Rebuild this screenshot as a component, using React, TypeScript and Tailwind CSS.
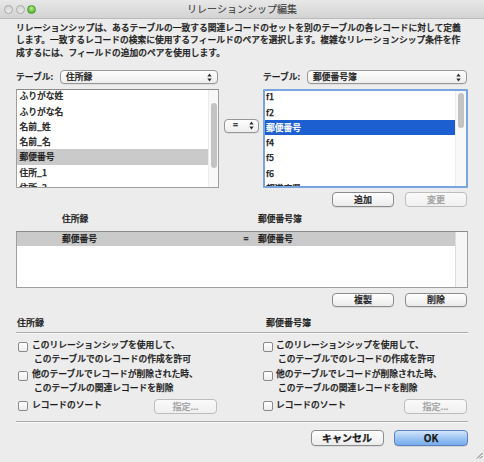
import React from "react";

function Light({ green }: { green?: boolean }) {
  return green ? (
    <span className="block w-[9px] h-[9px] rounded-full border border-[#4f9a33] bg-[radial-gradient(circle_at_50%_35%,#b9f08f_0%,#6cc447_55%,#4a9d2b_100%)]" />
  ) : (
    <span className="block w-[9px] h-[9px] rounded-full border border-[#a9a9a9] bg-gradient-to-b from-[#d6d6d6] to-[#ececec]" />
  );
}

function UpDown() {
  return (
    <svg width="5" height="9" viewBox="0 0 5 9" className="shrink-0">
      <path d="M2.5 0.6 L4.7 3.4 H0.3 Z M2.5 8.4 L4.7 5.6 H0.3 Z" fill="#2e2e2e" />
    </svg>
  );
}

function Popup({ w, label, pl, pr }: { w: string; label: string; pl: string; pr: string }) {
  return (
    <div
      className={`${w} ${pl} ${pr} h-[14px] flex items-center justify-between rounded-[4px] border border-[#979797] bg-gradient-to-b from-white to-[#ededed] shadow-[0_0.5px_0.5px_rgba(0,0,0,0.12)] leading-none`}
    >
      <span>{label}</span>
      <UpDown />
    </div>
  );
}

function Btn({ children, disabled, w }: { children: React.ReactNode; disabled?: boolean; w: string }) {
  return disabled ? (
    <div className={`${w} h-[14.5px] flex items-center justify-center rounded-[4px] border border-[#bdbdbd] bg-gradient-to-b from-[#fafafa] to-[#f0f0f0] text-[9px] text-[#a3a3a3] leading-none`}>
      {children}
    </div>
  ) : (
    <div className={`${w} h-[14.5px] flex items-center justify-center rounded-[4px] border border-[#8c8c8c] bg-gradient-to-b from-white to-[#ebebeb] shadow-[0_0.5px_0.5px_rgba(0,0,0,0.15)] text-[9px] text-[#1b1b1b] leading-none`}>
      {children}
    </div>
  );
}

function Check() {
  return (
    <span className="block shrink-0 w-[10px] h-[10px] rounded-[2px] border border-[#8a8a8a] bg-gradient-to-b from-white to-[#ececec]" />
  );
}

const leftItems = ["ふりがな姓", "ふりがな名", "名前_姓", "名前_名", "郵便番号", "住所_1", "住所_2"];
const rightItems = ["f1", "f2", "郵便番号", "f4", "f5", "f6", "都道府県"];

export default function App() {
  return (
    <div className="w-[484px] h-[462px] bg-[#ececec] relative overflow-hidden font-['Noto_Sans_CJK_JP','Noto_Sans',sans-serif] text-[8.75px] text-[#1b1b1b] font-medium [-webkit-text-stroke:0.25px]">
      {/* title bar */}
      <div className="h-[19px] grid grid-cols-[1fr_auto_1fr] items-center bg-gradient-to-b from-[#e8e8e8] to-[#d3d3d3] border-b border-[#bababa]">
        <div className="flex items-center gap-[2.5px] pl-[4px]">
          <Light />
          <Light />
          <Light green />
        </div>
        <div className="text-[10px] font-normal text-[#3b3b3b] leading-none [-webkit-text-stroke:0.1px]">リレーションシップ編集</div>
        <div />
      </div>

      <div className="px-[16px]">
        {/* description */}
        <p className="mt-[3px] leading-[12.4px] whitespace-nowrap">
          リレーションシップは、あるテーブルの一致する関連レコードのセットを別のテーブルの各レコードに対して定義
          <br />
          します。一致するレコードの検索に使用するフィールドのペアを選択します。複雑なリレーションシップ条件を作
          <br />
          成するには、フィールドの追加のペアを使用します。
        </p>

        {/* top lists */}
        <div className="mt-[11px] flex">
          <div className="w-[203px]">
            <div className="flex items-center h-[14px]">
              <span className="w-[44px] leading-none">テーブル:</span>
              <Popup w="w-[158px]" label="住所録" pl="pl-[5px]" pr="pr-[5px]" />
            </div>
            <div className="mt-[4.5px] h-[99px] border border-[#9f9f9f] border-t-[#8a8a8a] bg-white flex overflow-hidden">
              <div className="flex-1 -mt-[1.5px]">
                {leftItems.map((t) => (
                  <div
                    key={t}
                    className={`h-[15.3px] leading-[15.3px] pl-[2.5px] whitespace-nowrap ${t === "郵便番号" ? "bg-[#cacaca]" : ""}`}
                  >
                    {t}
                  </div>
                ))}
              </div>
              <div className="w-[10px] bg-[#f8f8f8] border-l border-[#ececec] pt-[13px] flex justify-center">
                <div className="w-[6px] h-[65px] rounded-full bg-[#c3c3c3]" />
              </div>
            </div>
          </div>

          <div className="w-[43px] pl-[5px] pt-[48.5px]">
            <Popup w="w-[35px]" label="=" pl="pl-[8px]" pr="pr-[4px]" />
          </div>

          <div className="w-[206px]">
            <div className="flex items-center h-[14px] ml-[1px]">
              <span className="w-[44px] leading-none">テーブル:</span>
              <Popup w="w-[160px]" label="郵便番号簿" pl="pl-[5px]" pr="pr-[5px]" />
            </div>
            <div className="mt-[4.5px] ml-[1px] h-[99px] border-2 border-[#78a4df] rounded-[1px] bg-white flex overflow-hidden">
              <div className="flex-1 -mt-[1.5px]">
                {rightItems.map((t) => (
                  <div
                    key={t}
                    className={`h-[15.3px] leading-[15.3px] pl-[1px] whitespace-nowrap ${t === "郵便番号" ? "bg-[#1b5fd1] text-white" : ""}`}
                  >
                    {t}
                  </div>
                ))}
              </div>
              <div className="w-[11px] bg-[#f8f8f8] border-l border-[#ececec] pt-[2px] pl-[2px]">
                <div className="w-[6px] h-[35px] rounded-full bg-[#c3c3c3]" />
              </div>
            </div>
          </div>
        </div>

        {/* add / change */}
        <div className="mt-[4.5px] flex justify-end gap-[11px] pr-[1px]">
          <Btn w="w-[62px]">追加</Btn>
          <Btn w="w-[62px]" disabled>
            変更
          </Btn>
        </div>

        {/* column headers */}
        <div className="mt-[6px] flex leading-[12px]">
          <span className="w-[242px] pl-[46px]">住所録</span>
          <span>郵便番号簿</span>
        </div>

        {/* relation table */}
        <div className="mt-[6px] h-[57px] border border-[#9f9f9f] border-t-[#8a8a8a] bg-white flex">
          <div className="flex-1">
            <div className="h-[14.5px] bg-[#cacaca] flex items-center leading-none">
              <span className="w-[224px] pl-[45px]">郵便番号</span>
              <span className="w-[10px] text-center">=</span>
              <span className="pl-[7px]">郵便番号</span>
            </div>
          </div>
          <div className="w-[12px] bg-[#f6f6f6] border-l border-[#dddddd]" />
        </div>

        {/* duplicate / delete */}
        <div className="mt-[5px] flex justify-end gap-[11px] pr-[1px]">
          <Btn w="w-[62px]">複製</Btn>
          <Btn w="w-[62px]">削除</Btn>
        </div>

        {/* section labels */}
        <div className="mt-[10px] flex leading-[12px] text-[9px]">
          <span className="w-[246px] pl-[1px]">住所録</span>
          <span className="pl-[4px]">郵便番号簿</span>
        </div>
        <div className="mt-[3px] h-[2px] border-t border-[#aaaaaa] border-b border-b-[#f8f8f8]" />

        {/* options */}
        <div className="mt-[4px] flex">
          {[0, 1].map((i) => (
            <div key={i} className={i === 0 ? "w-[246px]" : "flex-1"}>
              <div className={`flex items-start leading-[14px] ${i === 0 ? "ml-[2px]" : "ml-[1px]"}`}>
                <span className="mt-[4px]">
                  <Check />
                </span>
                <div className={i === 0 ? "ml-[4px]" : "ml-[3px]"}>
                  <div>このリレーションシップを使用して、</div>
                  <div className="pl-[2px]">このテーブルでのレコードの作成を許可</div>
                </div>
              </div>
              <div className={`mt-[1px] flex items-start leading-[14px] ${i === 0 ? "ml-[2px]" : "ml-[1px]"}`}>
                <span className="mt-[4px]">
                  <Check />
                </span>
                <div className={i === 0 ? "ml-[4px]" : "ml-[3px]"}>
                  <div>他のテーブルでレコードが削除された時、</div>
                  <div className="pl-[2px]">このテーブルの関連レコードを削除</div>
                </div>
              </div>
              <div className={`mt-[4px] flex items-center justify-between ${i === 0 ? "w-[201px]" : "w-[205px]"}`}>
                <div className={`flex items-center ${i === 0 ? "ml-[2px]" : "ml-[1px]"}`}>
                  <Check />
                  <span className={`${i === 0 ? "ml-[4px]" : "ml-[3px]"} leading-none -mt-[2px]`}>レコードのソート</span>
                </div>
                <Btn w="w-[63px]" disabled>
                  指定...
                </Btn>
              </div>
            </div>
          ))}
        </div>

        <div className="mt-[7.5px] h-[2px] border-t border-[#aaaaaa] border-b border-b-[#f8f8f8]" />

        {/* footer */}
        <div className="mt-[7px] flex justify-end gap-[10.5px]">
          <div className="w-[73px] h-[16px] flex items-center justify-center rounded-[4px] border border-[#8c8c8c] bg-gradient-to-b from-white to-[#ebebeb] shadow-[0_0.5px_0.5px_rgba(0,0,0,0.15)] text-[10px] font-bold leading-none">
            キャンセル
          </div>
          <div className="w-[74px] h-[16px] flex items-center justify-center rounded-[4px] border border-[#5d82bf] bg-gradient-to-b from-[#d3e5fb] via-[#9ec6f3] to-[#75acec] shadow-[0_0.5px_0.5px_rgba(0,0,0,0.2)] text-[10px] font-bold leading-none">
            OK
          </div>
        </div>
      </div>

      {/* resize grip */}
      <svg className="absolute right-[1px] bottom-[3px]" width="7" height="7" viewBox="0 0 7 7">
        <path d="M6.5 1 L1 6.5 M6.5 4 L4 6.5" stroke="#555" strokeWidth="0.8" />
      </svg>
    </div>
  );
}
